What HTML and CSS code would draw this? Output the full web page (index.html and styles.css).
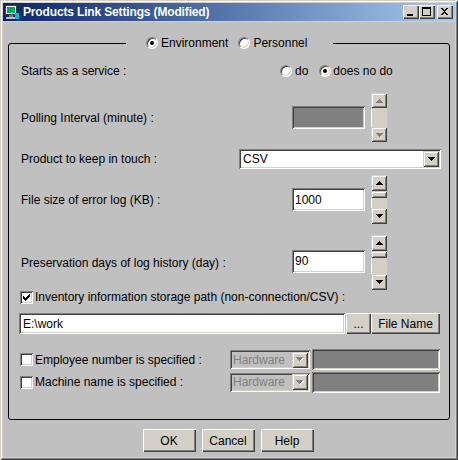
FILE: index.html
```html
<!DOCTYPE html>
<html>
<head>
<meta charset="utf-8">
<link rel="stylesheet" href="styles.css">
</head>
<body>
<div class="window">
  <div class="titlebar">
    <svg class="app-icon" width="16" height="16" viewBox="0 0 16 16" shape-rendering="crispEdges">
      <rect x="1" y="1" width="12" height="10" fill="#404040"/>
      <rect x="2" y="2" width="10" height="8" fill="#fff"/>
      <rect x="3" y="3" width="8" height="6" fill="#00a0a0"/>
      <path d="M4 8 L9 4 L10 8 Z" fill="#00c000"/>
      <rect x="5" y="11" width="4" height="2" fill="#808080"/>
      <rect x="2" y="13" width="10" height="2" fill="#c0c0c0"/>
      <rect x="11" y="9" width="4" height="6" fill="#00c0c0"/>
    </svg>
    <span class="title">Products Link Settings (Modified)</span>
    <div class="tb-btns">
      <span class="tb-btn"><svg width="16" height="14" viewBox="0 0 16 14" shape-rendering="crispEdges"><rect x="4" y="9" width="6" height="2" fill="#000"/></svg></span>
      <span class="tb-btn"><svg width="16" height="14" viewBox="0 0 16 14" shape-rendering="crispEdges"><path d="M3 2h9v9h-9z M4 4v6h7v-6z" fill="#000" fill-rule="evenodd"/></svg></span>
      <span class="tb-btn close"><svg width="16" height="14" viewBox="0 0 16 14" shape-rendering="crispEdges"><path d="M4 3h2v1h1v1h1v-1h1v-1h2v1h-1v1h-1v1h-1v1h1v1h1v1h1v1h-2v-1h-1v-1h-1v1h-1v1h-2v-1h1v-1h1v-1h1v-1h-1v-1h-1v-1h-1z" fill="#000"/></svg></span>
    </div>
  </div>

  <div class="client">
    <div class="group">
      <div class="legend">
        <span class="radio on"></span><span class="rtext">Environment</span>
        <span class="radio second"></span><span class="rtext">Personnel</span>
      </div>

      <div class="row r-starts">
        <span class="label w259">Starts as a service :</span>
        <span class="radio"></span><span class="rtext">do</span>
        <span class="radio second-do on"></span><span class="rtext tight">does no do</span>
      </div>

      <div class="row r-poll">
        <span class="label w271">Polling Interval (minute) :</span>
        <span class="field disabled num"></span>
        <div class="spin disabled">
          <span class="sbtn up"><svg width="7" height="4" viewBox="0 0 7 4" shape-rendering="crispEdges"><path d="M3 0h1v1h-1z M2 1h3v1h-3z M1 2h5v1h-5z M0 3h7v1h-7z"/></svg></span>
          <span class="track"></span>
          <span class="sbtn down"><svg width="7" height="4" viewBox="0 0 7 4" shape-rendering="crispEdges"><path d="M0 0h7v1h-7z M1 1h5v1h-5z M2 2h3v1h-3z M3 3h1v1h-1z"/></svg></span>
        </div>
      </div>

      <div class="row r-product">
        <span class="label w218">Product to keep in touch :</span>
        <div class="combo wide">
          <span class="ctext">CSV</span>
          <span class="dbtn"><svg width="7" height="4" viewBox="0 0 7 4" shape-rendering="crispEdges"><path d="M0 0h7v1h-7z M1 1h5v1h-5z M2 2h3v1h-3z M3 3h1v1h-1z"/></svg></span>
        </div>
      </div>

      <div class="row r-file">
        <span class="label w271">File size of error log (KB) :</span>
        <span class="field num">1000</span>
        <div class="spin">
          <span class="sbtn up"><svg width="7" height="4" viewBox="0 0 7 4" shape-rendering="crispEdges"><path d="M3 0h1v1h-1z M2 1h3v1h-3z M1 2h5v1h-5z M0 3h7v1h-7z"/></svg></span>
          <span class="thumb"></span>
          <span class="track"></span>
          <span class="sbtn down"><svg width="7" height="4" viewBox="0 0 7 4" shape-rendering="crispEdges"><path d="M0 0h7v1h-7z M1 1h5v1h-5z M2 2h3v1h-3z M3 3h1v1h-1z"/></svg></span>
        </div>
      </div>

      <div class="row r-pres">
        <span class="label w271">Preservation days of log history (day) :</span>
        <span class="field num">90</span>
        <div class="spin tall">
          <span class="sbtn up"><svg width="7" height="4" viewBox="0 0 7 4" shape-rendering="crispEdges"><path d="M3 0h1v1h-1z M2 1h3v1h-3z M1 2h5v1h-5z M0 3h7v1h-7z"/></svg></span>
          <span class="thumb"></span>
          <span class="track"></span>
          <span class="sbtn down"><svg width="7" height="4" viewBox="0 0 7 4" shape-rendering="crispEdges"><path d="M0 0h7v1h-7z M1 1h5v1h-5z M2 2h3v1h-3z M3 3h1v1h-1z"/></svg></span>
        </div>
      </div>

      <div class="row r-inv">
        <span class="check on"><svg width="7" height="7" viewBox="0 0 7 7" shape-rendering="crispEdges"><path d="M6 0h1v3h-1v1h-1v1h-1v1h-1v1h-1v-1h-1v-1h-1v-3h1v1h1v1h1v-1h1v-1h1z"/></svg></span>
        <span class="ctext-label">Inventory information storage path (non-connection/CSV) :</span>
      </div>

      <div class="row r-path">
        <span class="field path">E:\work</span>
        <span class="btn dots">...</span>
        <span class="btn fname">File Name</span>
      </div>

      <div class="row r-emp">
        <span class="check"></span>
        <span class="ctext-label w195">Employee number is specified :</span>
        <div class="combo hw">
          <span class="ctext">Hardware</span>
          <span class="dbtn dis"><svg width="8" height="5" viewBox="0 0 8 5" shape-rendering="crispEdges"><path d="M1 1h7v1h-7z M2 2h5v1h-5z M3 3h3v1h-3z M4 4h1v1h-1z" fill="#fff"/><path d="M0 0h7v1h-7z M1 1h5v1h-5z M2 2h3v1h-3z M3 3h1v1h-1z" fill="#808080"/></svg></span>
        </div>
        <span class="field disabled gray"></span>
      </div>

      <div class="row r-mach">
        <span class="check"></span>
        <span class="ctext-label w195">Machine name is specified :</span>
        <div class="combo hw">
          <span class="ctext">Hardware</span>
          <span class="dbtn dis"><svg width="8" height="5" viewBox="0 0 8 5" shape-rendering="crispEdges"><path d="M1 1h7v1h-7z M2 2h5v1h-5z M3 3h3v1h-3z M4 4h1v1h-1z" fill="#fff"/><path d="M0 0h7v1h-7z M1 1h5v1h-5z M2 2h3v1h-3z M3 3h1v1h-1z" fill="#808080"/></svg></span>
        </div>
        <span class="field disabled gray"></span>
      </div>
    </div>

    <div class="footer">
      <span class="btn dlg">OK</span>
      <span class="btn dlg">Cancel</span>
      <span class="btn dlg">Help</span>
    </div>
  </div>
</div>
</body>
</html>
```

FILE: styles.css
```css
* { box-sizing: border-box; margin: 0; padding: 0; }

body {
  width: 458px;
  height: 460px;
  overflow: hidden;
  background: #c0c0c0;
  font: 12px "Liberation Sans", Arial, sans-serif;
  color: #000;
}

.window {
  width: 458px;
  height: 460px;
  padding: 3px;
  background: #d4d0c8;
  box-shadow: inset 1px 1px #d4d0c8, inset -1px -1px #404040, inset 2px 2px #fff, inset -2px -2px #808080;
  display: flex;
  flex-direction: column;
}

/* title bar */
.titlebar {
  height: 18px;
  flex: 0 0 18px;
  display: flex;
  align-items: center;
  background: linear-gradient(to right, #0a246a, #a6caf0);
  color: #fff;
  padding-left: 1px;
}
.app-icon { flex: 0 0 16px; }
.title { font-weight: bold; font-size: 12px; letter-spacing: -0.15px; margin-left: 3px; white-space: nowrap; }
.tb-btns { margin-left: auto; margin-right: 2px; display: flex; }
.tb-btn {
  width: 16px;
  height: 14px;
  background: #d4d0c8;
  box-shadow: inset 1px 1px #fff, inset -1px -1px #404040, inset -2px -2px #808080;
  display: block;
}
.tb-btn svg { display: block; }
.tb-btn.close { margin-left: 2px; }

/* client */
.client {
  flex: 1;
  margin-top: 1px;
  background: #c0c0c0;
  display: flex;
  flex-direction: column;
}

.group {
  position: relative;
  margin: 21px 5px 0 5px;
  height: 377px;
  border: 1px solid #000;
  border-radius: 3px;
  padding: 18px 0 0 12px;
  display: flex;
  flex-direction: column;
}

.legend {
  position: absolute;
  top: -8px;
  left: 117px;
  width: 207px;
  height: 14px;
  background: #c0c0c0;
  padding-left: 20px;
  display: flex;
  align-items: center;
}

/* radio */
.radio {
  width: 12px;
  height: 12px;
  flex: 0 0 12px;
  border-radius: 50%;
  background: #fff;
  border: 1px solid;
  border-color: #808080 #fff #fff #808080;
  box-shadow: inset 1px 1px #404040, inset -1px -1px #d4d0c8;
  position: relative;
}
.radio.on::after {
  content: "";
  position: absolute;
  left: 3px;
  top: 3px;
  width: 4px;
  height: 4px;
  border-radius: 50%;
  background: #000;
}
.rtext { margin-left: 3px; white-space: nowrap; }
.legend .radio.second { margin-left: 10px; }
.r-starts .radio.second-do { margin-left: 11px; }
.rtext.tight { margin-left: 2px; }

/* rows */
.row { display: flex; align-items: center; flex: 0 0 auto; }
.label { white-space: nowrap; flex: 0 0 auto; }
.w259 { width: 259px; }
.w271 { width: 271px; }
.w218 { width: 218px; }

.r-starts { height: 18px; }
.r-poll { height: 49px; margin-top: 13px; }
.r-product { height: 20px; margin-top: 7px; }
.r-file { height: 49px; margin-top: 6px; }
.r-pres { height: 55px; margin-top: 11px; }
.r-inv { height: 14px; margin-top: 0; }
.r-path { height: 21px; margin-top: 9px; }
.r-emp { height: 21px; margin-top: 15px; }
.r-mach { height: 22px; margin-top: 1px; }

/* text fields */
.field {
  display: flex;
  align-items: center;
  background: #fff;
  box-shadow: inset 1px 1px #808080, inset -1px -1px #fff, inset 2px 2px #404040, inset -2px -2px #d4d0c8;
  padding-left: 3px;
  white-space: nowrap;
}
.field.disabled { background: #808080; }
.field.num { width: 73px; height: 23px; }
.r-poll .field.num { margin-top: -1px; }
.r-pres .field.num { margin-top: -3px; }
.field.path { width: 326px; height: 21px; margin-left: -2px; padding-left: 4px; }
.field.gray { width: 128px; height: 21px; margin-left: 2px; }

/* spinner */
.spin {
  width: 16px;
  height: 49px;
  margin-left: 6px;
  display: flex;
  flex-direction: column;
}
.spin.tall { height: 55px; }
.sbtn {
  flex: 0 0 16px;
  display: flex;
  align-items: center;
  justify-content: center;
  background: #d4d0c8;
  box-shadow: inset 1px 1px #d4d0c8, inset -1px -1px #404040, inset 2px 2px #fff, inset -2px -2px #808080;
}
.sbtn svg { fill: #000; }
.spin.disabled .sbtn { flex-basis: 15px; }
.spin.disabled .sbtn svg { fill: #808080; }
.thumb {
  flex: 0 0 7px;
  background: #d4d0c8;
  box-shadow: inset 1px 1px #d4d0c8, inset -1px -1px #404040, inset 2px 2px #fff, inset -2px -2px #808080;
}
.track {
  flex: 1;
  background: #d4d0c8;
  box-shadow: inset 1px 0 #fff;
}

/* combo */
.combo {
  display: flex;
  align-items: center;
  height: 20px;
  background: #fff;
  box-shadow: inset 1px 1px #808080, inset -1px -1px #fff, inset 2px 2px #404040, inset -2px -2px #d4d0c8;
  padding: 2px 2px 2px 4px;
}
.combo.wide { width: 202px; }
.combo .ctext { flex: 1; white-space: nowrap; }
.dbtn {
  width: 16px;
  height: 16px;
  display: flex;
  align-items: center;
  justify-content: center;
  background: #d4d0c8;
  box-shadow: inset 1px 1px #d4d0c8, inset -1px -1px #404040, inset 2px 2px #fff, inset -2px -2px #808080;
}
.dbtn svg { fill: #000; }
.combo.hw {
  width: 80px;
  height: 19px;
  background: #c0c0c0;
  padding-left: 3px;
}
.combo.hw .ctext { color: #808080; }

/* checkbox */
.check {
  width: 13px;
  height: 13px;
  flex: 0 0 13px;
  margin-left: -1px;
  background: #fff;
  box-shadow: inset 1px 1px #808080, inset -1px -1px #fff, inset 2px 2px #404040, inset -2px -2px #d4d0c8;
  display: flex;
  align-items: center;
  justify-content: center;
}
.check svg { fill: #000; }
.ctext-label { margin-left: 2px; white-space: nowrap; }
.w195 { width: 195px; flex: 0 0 195px; }

/* buttons */
.btn {
  display: flex;
  align-items: center;
  justify-content: center;
  background: #d4d0c8;
  box-shadow: inset 1px 1px #fff, inset -1px -1px #404040, inset -2px -2px #808080;
  white-space: nowrap;
}
.btn.dots { width: 25px; height: 21px; margin-left: 1px; }
.btn.fname { width: 69px; height: 21px; }

.footer {
  display: flex;
  justify-content: center;
  gap: 6px;
  margin-top: 9px;
  padding-right: 2px;
}
.btn.dlg { width: 53px; height: 23px; }
```
